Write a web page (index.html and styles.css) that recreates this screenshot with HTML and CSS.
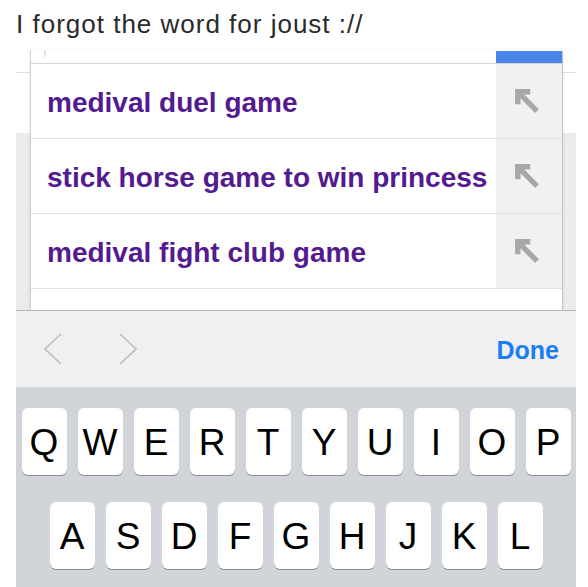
FILE: index.html
```html
<!DOCTYPE html>
<html lang="en">
<head>
    <meta charset="UTF-8">
    <title>joust</title>
    <link rel="stylesheet" href="styles.css">
</head>
<body>
<h1 class="caption">I forgot the word for joust ://</h1>

<div class="phone">
    <!-- page behind the suggestions -->
    <div class="page">
        <div class="page-bar"></div>
        <div class="page-white"></div>
        <div class="page-gray"></div>

        <div class="suggest">
            <div class="query">
                <span class="cursor"></span>
                <span class="query-tab"></span>
            </div>
            <div class="row">
                <span class="label">medival duel game</span>
                <span class="fill">
                    <svg width="26" height="26" viewBox="0 0 24 24"><path d="M1 1H15V6H9.5L23 19.5L19.5 23L6 9.5V15H1Z"/></svg>
                </span>
            </div>
            <div class="row">
                <span class="label">stick horse game to win princess</span>
                <span class="fill">
                    <svg width="26" height="26" viewBox="0 0 24 24"><path d="M1 1H15V6H9.5L23 19.5L19.5 23L6 9.5V15H1Z"/></svg>
                </span>
            </div>
            <div class="row">
                <span class="label">medival fight club game</span>
                <span class="fill">
                    <svg width="26" height="26" viewBox="0 0 24 24"><path d="M1 1H15V6H9.5L23 19.5L19.5 23L6 9.5V15H1Z"/></svg>
                </span>
            </div>
            <div class="row more"></div>
        </div>
    </div>

    <!-- keyboard accessory bar -->
    <div class="toolbar">
        <svg class="chev" width="18" height="32" viewBox="0 0 18 32"><polyline points="17,1 1,16 17,31"/></svg>
        <svg class="chev" width="18" height="32" viewBox="0 0 18 32"><polyline points="1,1 17,16 1,31"/></svg>
        <span class="done">Done</span>
    </div>

    <div class="keyboard">
        <div class="keys">
            <span class="key">Q</span><span class="key">W</span><span class="key">E</span><span class="key">R</span><span class="key">T</span>
            <span class="key">Y</span><span class="key">U</span><span class="key">I</span><span class="key">O</span><span class="key">P</span>
        </div>
        <div class="keys">
            <span class="key">A</span><span class="key">S</span><span class="key">D</span><span class="key">F</span><span class="key">G</span>
            <span class="key">H</span><span class="key">J</span><span class="key">K</span><span class="key">L</span>
        </div>
    </div>
</div>
</body>
</html>
```

FILE: styles.css
```css
body {
    margin: 0;
    background-color: #fff;
    font-family: "Liberation Sans", Arial, sans-serif;
    width: 588px;
    height: 587px;
    overflow: hidden;
}

.caption {
    margin: 0;
    height: 43px;
    box-sizing: border-box;
    padding: 9px 0 0 16px;
    font-size: 26px;
    line-height: 30px;
    font-weight: normal;
    letter-spacing: 1px;
    color: #2a2a2a;
}

.phone {
    margin-left: 16px;
    width: 560px;
    height: 544px;
    overflow: hidden;
}

/* page under the dropdown */
.page {
    position: relative;
    height: 267px;
    overflow: hidden;
}

.page-bar {
    height: 29px;
    border-bottom: 1px solid #dedede;
}

.page-white {
    height: 60px;
}

.page-gray {
    height: 177px;
    background-color: #ececec;
}

.suggest {
    position: absolute;
    left: 14px;
    top: 7px;
    width: 533px;
    box-sizing: border-box;
    border-left: 1px solid #cfcfcf;
    border-right: 1px solid #c6c6c6;
    background-color: #fff;
    box-shadow: 0 1px 3px rgba(0, 0, 0, 0.12);
}

.query {
    position: relative;
    height: 13px;
    border-bottom: 1px solid #d6d6d6;
    display: flex;
    justify-content: flex-end;
}

.cursor {
    position: absolute;
    left: 13px;
    top: 0;
    width: 2px;
    height: 7px;
    background-color: #dfe4f0;
}

.query-tab {
    width: 66px;
    height: 12px;
    margin-top: 1px;
    background-color: #4a86e8;
}

.row {
    display: flex;
    height: 74px;
    border-bottom: 1px solid #e1e1e1;
}

.label {
    flex: 1;
    padding-left: 16px;
    padding-top: 2px;
    line-height: 74px;
    font-size: 28px;
    font-weight: bold;
    color: #531b8f;
    white-space: nowrap;
}

.fill {
    width: 66px;
    background-color: #f1f1f1;
    display: flex;
    align-items: center;
    justify-content: center;
    padding-right: 4px;
    box-sizing: border-box;
}

.fill svg {
    fill: #a8a8a8;
}

.row.more {
    height: 40px;
    border-bottom: none;
}

/* accessory bar */
.toolbar {
    height: 77px;
    box-sizing: border-box;
    border-top: 1px solid #b9b9bc;
    background-color: #f0f0f2;
    display: flex;
    align-items: center;
    padding: 0 17px 0 28px;
}

.chev {
    fill: none;
    stroke: #bdbdbf;
    stroke-width: 1.6;
    margin-right: 57px;
}

.done {
    margin-left: auto;
    margin-top: 3px;
    font-size: 25px;
    font-weight: bold;
    color: #1a7ef2;
}

/* keyboard */
.keyboard {
    height: 200px;
    background-color: #d1d4d9;
    padding-top: 21px;
    box-sizing: border-box;
}

.keys {
    display: flex;
    justify-content: center;
    gap: 11px;
    margin-bottom: 27px;
}

.key {
    width: 45px;
    height: 67px;
    background-color: #fff;
    border-radius: 6px;
    box-shadow: 0 1px 0 #8a8b8e;
    display: flex;
    align-items: center;
    justify-content: center;
    padding-top: 2px;
    box-sizing: border-box;
    font-size: 37px;
    color: #000;
}
```
